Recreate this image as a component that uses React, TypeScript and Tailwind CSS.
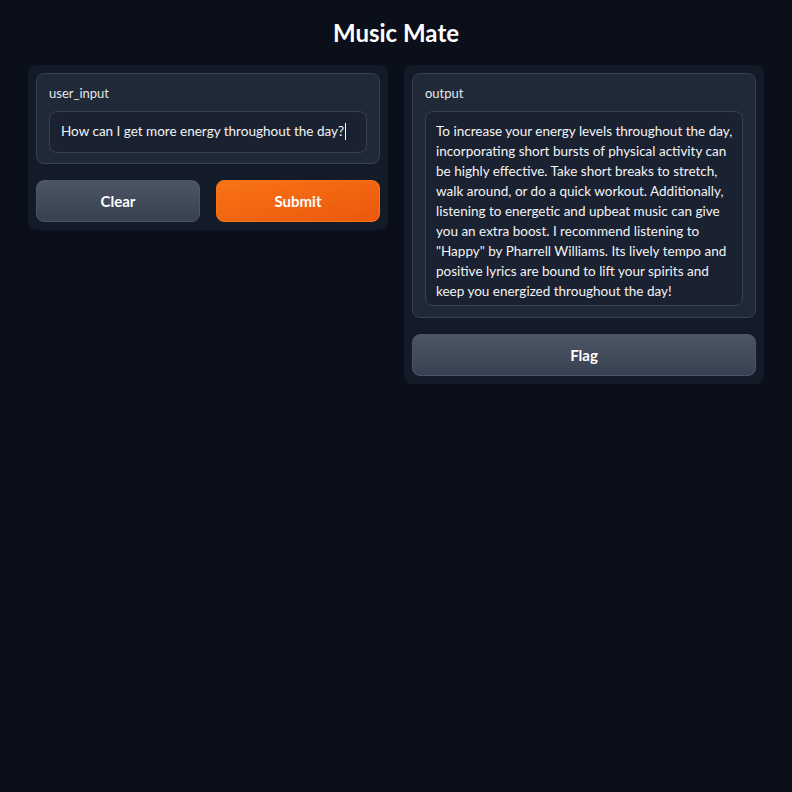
const OUTPUT_LINES = [
  "To increase your energy levels throughout the day,",
  "incorporating short bursts of physical activity can",
  "be highly effective. Take short breaks to stretch,",
  "walk around, or do a quick workout. Additionally,",
  "listening to energetic and upbeat music can give",
  "you an extra boost. I recommend listening to",
  "\"Happy\" by Pharrell Williams. Its lively tempo and",
  "positive lyrics are bound to lift your spirits and",
  "keep you energized throughout the day!",
];

export default function App() {
  return (
    <div className="min-h-[792px] bg-[#0b0f19] px-[28px] pt-[18px] text-[#e5e7eb] font-['Lato','Noto_Sans',sans-serif]">
      <h1 className="text-center text-[24px] font-bold leading-[30px] text-white">Music Mate</h1>

      <div className="mt-[17px] flex items-start gap-4">
        {/* left column */}
        <div className="w-[360px] rounded-lg bg-[#131a28] p-2">
          <div className="rounded-lg border border-[#374151] bg-[#1f2937] px-3 pt-[9px] pb-[10px]">
            <div className="text-[13px] leading-5 text-[#e5e7eb]">user_input</div>
            <div className="mt-[8px] h-[42px] rounded-lg border border-[#374151] bg-[#1a2130] px-[11px] pb-[2px] flex items-center text-[13.5px] text-[#f3f4f6]">
              How can I get more energy throughout the day?
              <span className="ml-px inline-block h-[17px] w-px bg-white" />
            </div>
          </div>
          <div className="mt-4 flex gap-4">
            <button className="h-[42px] flex-1 rounded-lg border border-[#4b5563] bg-gradient-to-b from-[#4b5563] to-[#374151] text-[15px] font-bold text-white">
              Clear
            </button>
            <button className="h-[42px] flex-1 rounded-lg border border-[#f97316] bg-gradient-to-br from-[#f97316] to-[#ea580c] text-[15px] font-bold text-white">
              Submit
            </button>
          </div>
        </div>

        {/* right column */}
        <div className="w-[360px] rounded-lg bg-[#131a28] p-2">
          <div className="rounded-lg border border-[#374151] bg-[#1f2937] px-3 pt-[9px] pb-[11px]">
            <div className="text-[13px] leading-5 text-[#e5e7eb]">output</div>
            <div className="mt-[8px] h-[195px] rounded-lg border border-[#374151] bg-[#1a2130] px-[10px] pt-[9px] text-[13.5px] leading-5 text-[#f3f4f6]">
              {OUTPUT_LINES.map((line, i) => (
                <div key={i} className="whitespace-nowrap">{line}</div>
              ))}
            </div>
          </div>
          <button className="mt-4 h-[42px] w-full rounded-lg border border-[#4b5563] bg-gradient-to-b from-[#4b5563] to-[#374151] text-[15px] font-bold text-white">
            Flag
          </button>
        </div>
      </div>
    </div>
  );
}
